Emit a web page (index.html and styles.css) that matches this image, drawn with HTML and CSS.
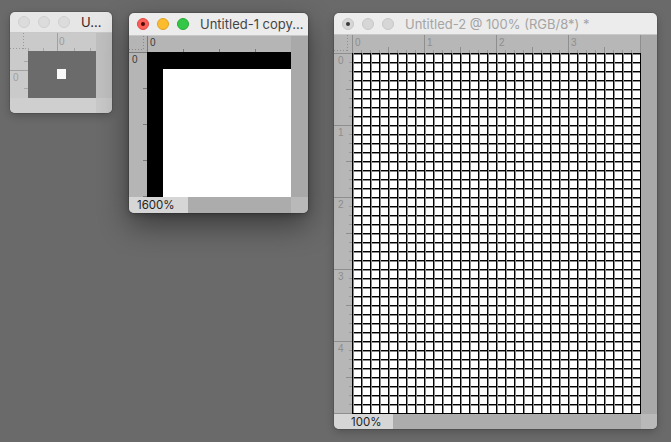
FILE: index.html
```html
<!DOCTYPE html>
<html>
<head>
<meta charset="utf-8">
<link rel="stylesheet" href="styles.css">
</head>
<body>
<div class="desktop">

  <div class="win win1">
    <div class="titlebar">
      <span class="light off"></span><span class="light off"></span><span class="light off"></span>
      <span class="title">U...</span>
    </div>
    <div class="body">
      <div class="corner"></div>
      <div class="hruler"><span class="mark">0</span></div>
      <div class="vruler"><span class="mark">0</span></div>
      <div class="canvas"><span class="doc"></span></div>
      <div class="scroll"></div>
    </div>
    <div class="status"><span class="zoom"></span><span class="rest"></span><span class="grip"></span></div>
  </div>

  <div class="win win2">
    <div class="titlebar">
      <span class="light red"><i></i></span><span class="light yellow"></span><span class="light green"></span>
      <span class="title">Untitled-1 copy...</span>
    </div>
    <div class="body">
      <div class="corner"></div>
      <div class="hruler"><span class="mark">0</span></div>
      <div class="vruler"><span class="mark">0</span></div>
      <div class="canvas"><div class="white"></div></div>
      <div class="scroll"></div>
    </div>
    <div class="status"><span class="zoom">1600%</span><span class="rest"></span><span class="grip"></span></div>
  </div>

  <div class="win win3">
    <div class="titlebar">
      <span class="light off"><i></i></span><span class="light off"></span><span class="light off"></span>
      <span class="title">Untitled-2 @ 100% (RGB/8*) *</span>
    </div>
    <div class="body">
      <div class="corner"></div>
      <div class="hruler">
        <span class="unit">0</span><span class="unit">1</span><span class="unit">2</span><span class="unit">3</span>
      </div>
      <div class="vruler">
        <span class="unit">0</span><span class="unit">1</span><span class="unit">2</span><span class="unit">3</span><span class="unit">4</span>
      </div>
      <div class="canvas"></div>
      <div class="scroll"></div>
    </div>
    <div class="status"><span class="zoom">100%</span><span class="rest"></span><span class="grip"></span></div>
  </div>

</div>
</body>
</html>
```

FILE: styles.css
```css
html, body {
  margin: 0;
  padding: 0;
}
body {
  background: #6a6a6a;
  width: 671px;
  height: 442px;
  overflow: hidden;
  font-family: "Inter", "Noto Sans", sans-serif;
}
.desktop {
  position: relative;
  width: 671px;
  height: 442px;
  background: #6a6a6a;
}

/* window */
.win {
  position: absolute;
  display: flex;
  flex-direction: column;
  border-radius: 5px;
  overflow: hidden;
  box-shadow: 0 0 0 1px rgba(0,0,0,0.10), 0 3px 8px rgba(0,0,0,0.22);
}
.titlebar {
  display: flex;
  align-items: center;
  background: #ebebeb;
  padding-left: 8px;
  gap: 8px;
  flex: none;
  border-bottom: 1px solid #c8c8c8;
  box-sizing: border-box;
}
.light {
  width: 12px;
  height: 12px;
  border-radius: 50%;
  box-sizing: border-box;
  display: flex;
  align-items: center;
  justify-content: center;
  flex: none;
}
.light i {
  width: 4px;
  height: 4px;
  border-radius: 50%;
  background: #3a3a3a;
}
.light.off {
  background: #d6d6d6;
  border: 1px solid #c6c6c6;
}
.light.red { background: #fc5f57; border: 1px solid #de4a43; }
.light.red i { background: #4a0a06; }
.light.yellow { background: #fdbc2e; border: 1px solid #dea125; }
.light.green { background: #33c748; border: 1px solid #27aa35; }
.title {
  font-size: 13px;
  white-space: nowrap;
  margin-left: 3px;
}

.body {
  display: grid;
  grid-template-areas:
    "corner hr scroll"
    "vr canvas scroll";
  flex: none;
}
.corner { grid-area: corner; }
.hruler { grid-area: hr; display: flex; overflow: hidden; }
.vruler { grid-area: vr; display: flex; flex-direction: column; overflow: hidden; }
.canvas { grid-area: canvas; }
.scroll { grid-area: scroll; }

.status {
  display: flex;
  flex: none;
  font-family: "Inter", "Noto Sans", sans-serif;
  font-size: 11px;
  color: #1e1e1e;
}
.status .zoom {
  display: flex;
  align-items: center;
  box-sizing: border-box;
  width: 59px;
}
.status .rest { flex: 1; }
.status .grip { flex: none; }

/* ---------- window 1 ---------- */
.win1 {
  left: 10px;
  top: 12px;
  width: 102px;
  height: 101px;
}
.win1 .titlebar { height: 21px; background: #e6e6e6; }
.win1 .light.off { background: #dcdcdc; border-color: #cfcfcf; }
.win1 .title { color: #3a2424; }
.win1 .body {
  grid-template-columns: 18px 68px 16px;
  grid-template-rows: 18px 47px;
}
.win1 .corner {
  background:
    repeating-linear-gradient(to bottom, #9a9a9a 0 1px, transparent 1px 3px) 13px 0 / 1px 16px no-repeat,
    repeating-linear-gradient(to right, #9a9a9a 0 1px, transparent 1px 3px) 0 15px / 16px 1px no-repeat,
    #cacaca;
}
.win1 .hruler {
  background:
    linear-gradient(#a0a0a0, #a0a0a0) 29px 0 / 1px 100% no-repeat,
    linear-gradient(#a8a8a8, #a8a8a8) 0 15px / 1px 3px no-repeat,
    linear-gradient(#a8a8a8, #a8a8a8) 15px 15px / 1px 3px no-repeat,
    linear-gradient(#a8a8a8, #a8a8a8) 46px 15px / 1px 3px no-repeat,
    linear-gradient(#a8a8a8, #a8a8a8) 62px 15px / 1px 3px no-repeat,
    #cacaca;
  font-size: 10px;
  color: #9a9a9a;
}
.win1 .hruler .mark { padding: 3px 0 0 31px; font-family: "Liberation Sans", sans-serif; }
.win1 .vruler {
  background:
    linear-gradient(#a0a0a0, #a0a0a0) 0 19px / 100% 1px no-repeat,
    linear-gradient(#a8a8a8, #a8a8a8) 14px 10px / 4px 1px no-repeat,
    linear-gradient(#a8a8a8, #a8a8a8) 14px 37px / 4px 1px no-repeat,
    #cacaca;
  font-size: 10px;
  color: #a0a0a0;
}
.win1 .vruler .mark { padding: 21px 0 0 3px; font-family: "Liberation Sans", sans-serif; }
.win1 .canvas {
  background: #6b6b6b;
  padding: 18px 0 0 29px;
  box-sizing: border-box;
}
.win1 .doc {
  display: block;
  width: 9px;
  height: 10px;
  background: #fafafa;
}
.win1 .scroll { background: #bfbfbf; }
.win1 .status { height: 15px; background: #c7c7c7; }
.win1 .status .zoom { width: 86px; background: #cfcfcf; }
.win1 .status .rest { display: none; }
.win1 .status .grip { width: 16px; background: #c8c8c8; }

/* ---------- window 2 ---------- */
.win2 {
  left: 129px;
  top: 13px;
  width: 179px;
  height: 200px;
  box-shadow: 0 0 0 1px rgba(0,0,0,0.12), 0 12px 30px rgba(0,0,0,0.45), 0 2px 6px rgba(0,0,0,0.2);
  z-index: 2;
}
.win2 .titlebar { height: 23px; background: #ececec; }
.win2 .title { color: #454545; }
.win2 .body {
  grid-template-columns: 18px 144px 17px;
  grid-template-rows: 16px 145px;
}
.win2 .corner {
  background:
    repeating-linear-gradient(to bottom, #8a8a8a 0 1px, transparent 1px 3px) 14px 0 / 1px 14px no-repeat,
    repeating-linear-gradient(to right, #8a8a8a 0 1px, transparent 1px 3px) 0 13px / 15px 1px no-repeat,
    #b5b5b5;
}
.win2 .hruler {
  background:
    linear-gradient(#7a7a7a, #7a7a7a) 0 0 / 1px 100% no-repeat,
    linear-gradient(to right, #7a7a7a 1px, transparent 1px) 0 13px / 36px 3px repeat-x,
    #b5b5b5;
  font-size: 10px;
  color: #3a3a3a;
}
.win2 .hruler .mark { padding: 1px 0 0 3px; font-family: "Liberation Sans", sans-serif; }
.win2 .vruler {
  background:
    linear-gradient(#7a7a7a, #7a7a7a) 0 0 / 100% 1px no-repeat,
    linear-gradient(to bottom, #7a7a7a 1px, transparent 1px) 14px 0 / 4px 36px repeat-y,
    #b5b5b5;
  font-size: 10px;
  color: #3a3a3a;
}
.win2 .vruler .mark { padding: 2px 0 0 3px; font-family: "Liberation Sans", sans-serif; }
.win2 .canvas {
  background: #000;
  padding: 17px 0 0 16px;
  box-sizing: border-box;
  display: flex;
}
.win2 .white { flex: 1; background: #fff; }
.win2 .scroll { background: #a9a9a9; }
.win2 .status { height: 16px; background: #acacac; }
.win2 .status .zoom { width: 59px; background: #d6d6d6; padding-left: 8px; font-size: 11.5px; }
.win2 .status .grip { width: 17px; background: #b9b9b9; }

/* ---------- window 3 ---------- */
.win3 {
  left: 334px;
  top: 13px;
  width: 323px;
  height: 416px;
}
.win3 .titlebar { height: 22px; background: #ececec; }
.win3 .title { color: #a4a4a4; }
.win3 .body {
  grid-template-columns: 18px 289px 16px;
  grid-template-rows: 18px 361px;
}
.win3 .corner {
  background:
    repeating-linear-gradient(to bottom, #8f8f8f 0 1px, transparent 1px 3px) 13px 0 / 1px 16px no-repeat,
    repeating-linear-gradient(to right, #8f8f8f 0 1px, transparent 1px 3px) 0 15px / 15px 1px no-repeat,
    #b7b7b7;
}
.win3 .hruler {
  background:
    linear-gradient(to right, #8e8e8e 1px, transparent 1px) 0 0 / 72px 100% repeat-x,
    linear-gradient(to right, #8e8e8e 1px, transparent 1px) 0 12px / 36px 6px repeat-x,
    linear-gradient(to right, #999 1px, transparent 1px) 0 15px / 9px 3px repeat-x,
    #b7b7b7;
}
.win3 .vruler {
  background:
    linear-gradient(to bottom, #8e8e8e 1px, transparent 1px) 0 0 / 100% 72px repeat-y,
    linear-gradient(to bottom, #8e8e8e 1px, transparent 1px) 12px 0 / 6px 36px repeat-y,
    linear-gradient(to bottom, #999 1px, transparent 1px) 15px 0 / 3px 9px repeat-y,
    #b7b7b7;
}
.win3 .unit {
  flex: none;
  font-family: "Liberation Sans", sans-serif;
  font-size: 10px;
  color: #8e8e8e;
  box-sizing: border-box;
}
.win3 .hruler .unit { width: 72px; padding: 2px 0 0 3px; }
.win3 .vruler .unit { height: 72px; padding: 2px 0 0 4px; }
.win3 .canvas {
  background:
    linear-gradient(to right, #000 1px, #8a8a8a 1px 2px, transparent 2px) 0 0 / 9px 9px,
    linear-gradient(to bottom, #000 1px, #8a8a8a 1px 2px, transparent 2px) 0 0 / 9px 9px,
    #fff;
  box-shadow: inset -1px -1px 0 #000;
}
.win3 .scroll { background: #a9a9a9; }
.win3 .status { height: 15px; background: #acacac; }
.win3 .status .zoom { width: 59px; background: #d6d6d6; padding-left: 17px; font-size: 11.5px; }
.win3 .status .grip { width: 16px; background: #b9b9b9; }
```
